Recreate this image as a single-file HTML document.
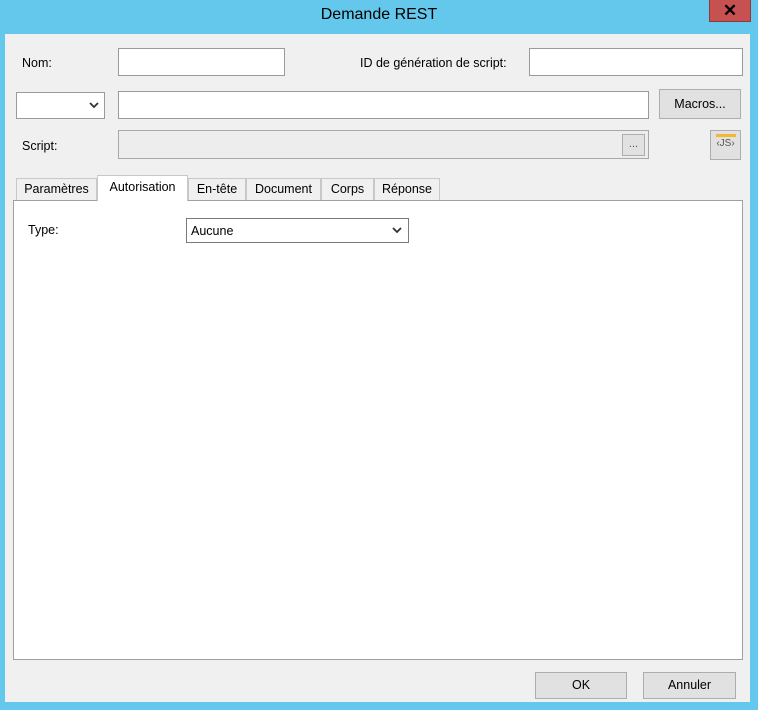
<!DOCTYPE html><html><head><style>
*{box-sizing:border-box;margin:0;padding:0}
body{width:758px;height:710px;background:#63c8eb;font-family:"Liberation Sans",sans-serif;font-size:12.5px;color:#000;position:relative;overflow:hidden}
.a{position:absolute}
.title{left:0;top:6px;width:758px;text-align:center;font-size:16px;color:#000}
.close{left:709px;top:0;width:42px;height:22px;background:#c75050;border:1px solid #8a3a3a;border-top:none;color:#000;font-size:17px;font-weight:bold;text-align:center;line-height:21px}
.client{left:5px;top:34px;width:745px;height:668px;background:#f0f0f0}
.in{background:#fff;border:1px solid #9a9a9a}
.dis{background:#ededed;border:1px solid #a8a8a8}
.btn{background:#e1e1e1;border:1px solid #adadad;text-align:center}
.lbl{font-size:12.5px}
.tab{top:178px;height:22px;background:#f0f0f0;border:1px solid #c8c8c8;border-bottom:none;text-align:center;line-height:21px}
</style></head><body>
<div class="a title">Demande REST</div>
<div class="a close">✕</div>
<div class="a client"></div>
<div class="a lbl" style="left:22px;top:56px">Nom:</div>
<div class="a in" style="left:118px;top:48px;width:167px;height:28px"></div>
<div class="a lbl" style="left:360px;top:56px">ID de génération de script:</div>
<div class="a in" style="left:529px;top:48px;width:214px;height:28px"></div>
<div class="a in" style="left:16px;top:92px;width:89px;height:27px"></div>
<svg class="a" style="left:89px;top:101px" width="10" height="8"><path d="M1 2l4 4 4-4" stroke="#333" stroke-width="1.8" fill="none"/></svg>
<div class="a in" style="left:118px;top:91px;width:531px;height:28px"></div>
<div class="a btn" style="left:659px;top:89px;width:82px;height:30px;line-height:28px">Macros...</div>
<div class="a lbl" style="left:22px;top:139px">Script:</div>
<div class="a dis" style="left:118px;top:130px;width:531px;height:29px"></div>
<div class="a btn" style="left:622px;top:134px;width:23px;height:22px;line-height:18px;font-size:11px;color:#555">...</div>
<div class="a btn" style="left:710px;top:130px;width:31px;height:30px"><div style="margin:3px auto 0;width:20px;height:3px;background:#f5b731"></div><div style="font-size:10px;color:#555;line-height:14px">‹JS›</div></div>
<div class="a" style="left:13px;top:200px;width:730px;height:460px;background:#fff;border:1px solid #a0a0a0"></div>
<div class="a tab" style="left:16px;width:81px">Paramètres</div>
<div class="a tab" style="left:97px;top:175px;width:91px;height:26px;background:#fff;line-height:23px;z-index:2">Autorisation</div>
<div class="a tab" style="left:188px;width:58px">En-tête</div>
<div class="a tab" style="left:246px;width:75px">Document</div>
<div class="a tab" style="left:321px;width:53px">Corps</div>
<div class="a tab" style="left:374px;width:66px">Réponse</div>
<div class="a lbl" style="left:28px;top:223px">Type:</div>
<div class="a in" style="left:186px;top:218px;width:223px;height:25px;border-color:#7a7a7a;padding:5px 4px">Aucune</div>
<svg class="a" style="left:392px;top:226px" width="10" height="8"><path d="M1 2l4 4 4-4" stroke="#333" stroke-width="1.8" fill="none"/></svg>
<div class="a btn" style="left:535px;top:672px;width:92px;height:27px;line-height:25px">OK</div>
<div class="a btn" style="left:643px;top:672px;width:93px;height:27px;line-height:25px">Annuler</div>
</body></html>
